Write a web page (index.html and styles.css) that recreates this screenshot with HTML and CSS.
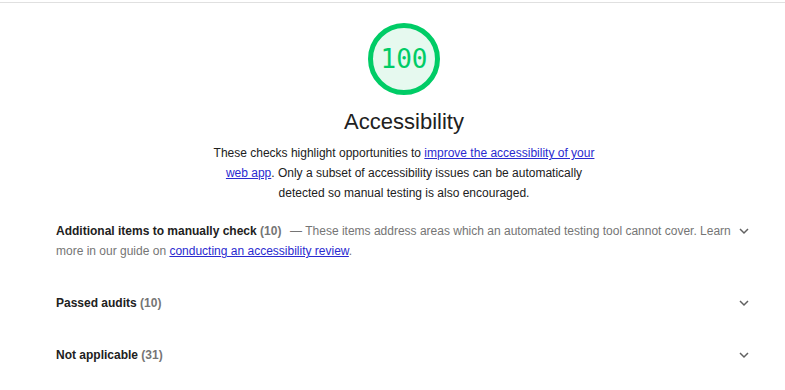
FILE: index.html
```html
<!DOCTYPE html>
<html lang="en">
<head>
    <meta charset="UTF-8">
    <meta name="viewport" content="width=device-width, initial-scale=1.0">
    <title>Accessibility</title>
    <link rel="stylesheet" href="styles.css">
</head>
<body>
    <div class="category">
        <div class="category-header">
            <div class="gauge">
                <svg viewBox="0 0 72 72" width="72" height="72">
                    <circle cx="36" cy="36" r="33.5" class="gauge-base"/>
                </svg>
                <span class="gauge-score">100</span>
            </div>
            <h2 class="category-title">Accessibility</h2>
            <p class="category-description">These checks highlight opportunities to <a href="#">improve the accessibility of your web app</a>. Only a subset of accessibility issues can be automatically detected so manual testing is also encouraged.</p>
        </div>

        <div class="group">
            <div class="group-text">
                <span class="group-title">Additional items to manually check</span>
                <span class="group-count">(10)</span>
                <span class="group-description">&nbsp;&mdash; These items address areas which an automated testing tool cannot cover. Learn more in our guide on <a href="#">conducting an accessibility review</a>.</span>
            </div>
            <span class="chevron"><svg viewBox="0 0 16 12" width="16" height="12"><polyline points="4,4 8,8 12,4"/></svg></span>
        </div>

        <div class="group">
            <div class="group-text">
                <span class="group-title">Passed audits</span>
                <span class="group-count">(10)</span>
            </div>
            <span class="chevron"><svg viewBox="0 0 16 12" width="16" height="12"><polyline points="4,4 8,8 12,4"/></svg></span>
        </div>

        <div class="group">
            <div class="group-text">
                <span class="group-title">Not applicable</span>
                <span class="group-count">(31)</span>
            </div>
            <span class="chevron"><svg viewBox="0 0 16 12" width="16" height="12"><polyline points="4,4 8,8 12,4"/></svg></span>
        </div>
    </div>
</body>
</html>
```
FILE: styles.css
```css
body {
    margin: 0;
    padding-top: 2px;
    font-family: "Liberation Sans", Arial, sans-serif;
    color: #212121;
    background: #fff;
}
a {
    color: #2a2ad0;
}
.category {
    border-top: 1px solid #e0e0e0;
    padding: 0 33px 0 56px;
}
.category-header {
    display: flex;
    flex-direction: column;
    align-items: center;
    text-align: center;
}
.gauge {
    position: relative;
    width: 72px;
    height: 72px;
    margin-top: 20px;
}
.gauge svg {
    display: block;
}
.gauge-base {
    fill: #e6f9ef;
    stroke: #0c6;
    stroke-width: 5;
}
.gauge-score {
    position: absolute;
    inset: 0;
    display: flex;
    align-items: center;
    justify-content: center;
    font-family: "DejaVu Sans Mono", monospace;
    font-size: 26px;
    color: #0c6;
}
.category-title {
    margin: 13px 0 0;
    font-size: 22px;
    font-weight: normal;
    line-height: 28px;
}
.category-description {
    margin: 7px 0 0;
    max-width: 400px;
    font-size: 12px;
    line-height: 20px;
}
.group {
    display: flex;
    align-items: flex-start;
    padding: 16px 0;
    font-size: 12px;
    line-height: 20px;
}
.category-header + .group {
    margin-top: 2px;
}
.group-text {
    flex: 1;
    margin-right: 4px;
}
.group-title {
    font-weight: bold;
}
.group-count {
    font-weight: bold;
    color: #757575;
}
.group-description {
    margin-left: 2px;
    color: #757575;
}
.chevron {
    display: flex;
    align-items: center;
    height: 20px;
}
.chevron svg {
    display: block;
}
.chevron polyline {
    fill: none;
    stroke: #616161;
    stroke-width: 1.5;
}
```
